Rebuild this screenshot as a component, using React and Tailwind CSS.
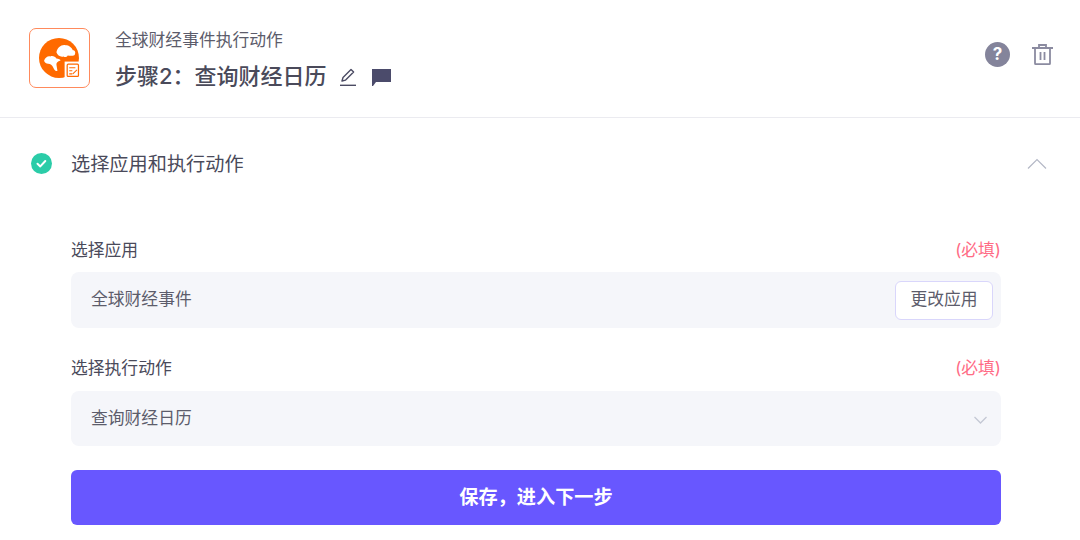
import React from 'react';

const cn = '"Inter", "Noto Sans CJK SC", sans-serif';

const AppLogo = () => (
  <svg width="41" height="41" viewBox="0 0 40 40">
    <circle cx="19.5" cy="19.5" r="19.5" fill="#ff6a00" />
    <path d="M17 14c1-5 5-8 9-7 3 0 6 2 7 5 2 0 3 2 2 4-1 2-5 1-7 1-1 2-3 2-4 1-3 1-6-1-7-4z" fill="#fff" />
    <path d="M5 22c1-3 4-5 6-4 2-1 5 0 6 2 2 0 4 1 4 2-3 1-4 2-4 4l1 6c-2 1-3-1-4-3-1-3-3-4-5-4-2 0-4-1-4-3z" fill="#fff" />
    <rect x="25" y="23" width="16" height="17" fill="#fff" />
    <rect x="27.5" y="25.5" width="11" height="12" rx="1" fill="none" stroke="#ff6a00" strokeWidth="1.2" />
    <path d="M29.5 29h6M29.5 32h3M29.5 35h3M33 35l4-4" fill="none" stroke="#ff6a00" strokeWidth="1" />
  </svg>
);

const Field = ({ label, children }) => (
  <div>
    <div className="flex justify-between items-center h-[20px] text-[16.8px] leading-[20px]">
      <span className="text-[#4a4a5a]">{label}</span>
      <span className="text-[#ff6b85]">(必填)</span>
    </div>
    {children}
  </div>
);

export default function App() {
  return (
    <div className="w-[1080px] h-[540px] bg-white overflow-hidden" style={{ fontFamily: cn }}>
      <header className="h-[118px] border-b border-[#ebebf0] pl-[29px] pr-[27px] pt-[28px] flex">
        <div className="w-[61px] h-[60px] rounded-[7px] border border-[#ff8a5c] flex items-center justify-center">
          <AppLogo />
        </div>
        <div className="ml-[25px] flex-1">
          <div className="text-[16.8px] leading-[22px] mt-[1px] text-[#5c5c6b]">全球财经事件执行动作</div>
          <div className="mt-[12px] flex items-center h-[26px]">
            <span className="text-[22px] whitespace-nowrap w-[210px] leading-[26px] font-medium text-[#4a4a5a]">步骤2：查询财经日历</span>
            <svg className="ml-[14px] mt-[2px]" width="18" height="20" viewBox="0 0 18 20" fill="none" stroke="#4b4b63" strokeWidth="1.4">
              <path d="M3 14l1-3.5L12 2.5l2.6 2.6-8 8z" strokeLinejoin="round" />
              <path d="M1 18.3h16" />
            </svg>
            <svg className="ml-[15px] mt-[2px]" width="19" height="19" viewBox="0 0 19 19">
              <path d="M0 1h19v13H4l-3 4H0z" fill="#4b4b6b" />
            </svg>
          </div>
        </div>
        <div className="flex items-start gap-[22px] pt-[14px]">
          <div className="w-[25px] h-[25px] rounded-full bg-[#84849b] text-white flex items-center justify-center text-[17px] font-bold leading-none">?</div>
          <svg className="mt-[2px]" width="21" height="21" viewBox="0 0 21 21" fill="none" stroke="#8b8ba0" strokeWidth="1.8">
            <path d="M0 4h21M7 4V1h7v3" />
            <path d="M3 4v15.5a.6.6 0 0 0 .6.6h13.8a.6.6 0 0 0 .6-.6V4" />
            <path d="M8.5 8v8M12.5 8v8" />
          </svg>
        </div>
      </header>

      <div className="h-[92px] pl-[31px] pr-[33px] flex items-center">
        <div className="w-[21px] h-[21px] mb-[2px] rounded-full bg-[#2bcca8] flex items-center justify-center">
          <svg width="13" height="13" viewBox="0 0 13 13" fill="none" stroke="#fff" strokeWidth="2" strokeLinecap="round" strokeLinejoin="round">
            <path d="M2.5 6.8l2.8 2.6 5-5.4" />
          </svg>
        </div>
        <span className="ml-[19px] text-[19.2px] text-[#4a4a5a] flex-1">选择应用和执行动作</span>
        <svg className="mb-[2px]" width="20" height="11" viewBox="0 0 20 11" fill="none" stroke="#b4b8c6" strokeWidth="1.2">
          <path d="M1 10.5l9-9 9 9" />
        </svg>
      </div>

      <main className="px-[71px] w-[1072px] mt-[30px]">
        <Field label="选择应用">
          <div className="mt-[12px] h-[56px] rounded-[8px] bg-[#f5f6fa] pl-[20px] pr-[8px] flex items-center justify-between">
            <span className="text-[16.8px] text-[#5c5c6b]">全球财经事件</span>
            <button className="w-[98px] h-[39px] bg-white rounded-[6px] border border-[#d9d6fb] text-[16.8px] text-[#5c5c6b]">更改应用</button>
          </div>
        </Field>
        <div className="mt-[30px]">
          <Field label="选择执行动作">
            <div className="mt-[13px] h-[55px] rounded-[8px] bg-[#f5f6fa] pl-[20px] pr-[14px] flex items-center justify-between">
              <span className="text-[16.8px] text-[#5c5c6b]">查询财经日历</span>
              <svg className="mt-[3px]" width="13" height="8" viewBox="0 0 13 8" fill="none" stroke="#c4c8d4" strokeWidth="1.3">
                <path d="M.5 1l6 6 6-6" />
              </svg>
            </div>
          </Field>
        </div>
        <button className="mt-[24px] w-full h-[55px] rounded-[6px] bg-[#6857ff] text-white text-[19.2px] font-bold">保存，进入下一步</button>
      </main>
    </div>
  );
}
